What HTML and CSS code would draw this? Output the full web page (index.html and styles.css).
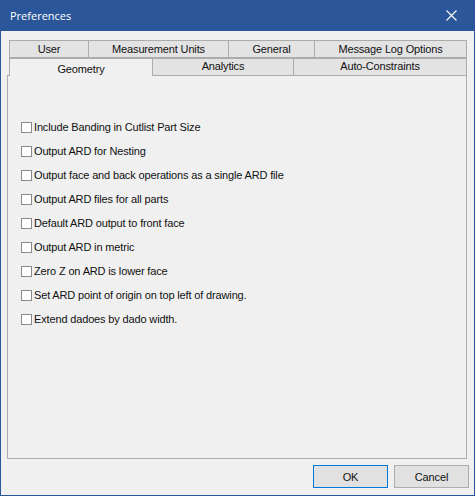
FILE: index.html
```html
<!DOCTYPE html>
<html>
<head>
<meta charset="utf-8">
<title>Preferences</title>
<link rel="stylesheet" href="styles.css">
</head>
<body>
<div class="window">
  <div class="titlebar">
    <span class="title">Preferences</span>
    <span class="close">
      <svg width="11" height="11" viewBox="0 0 11 11"><path d="M0.5 0.5 L10.5 10.5 M10.5 0.5 L0.5 10.5" stroke="#ffffff" stroke-width="1.1" fill="none"/></svg>
    </span>
  </div>
  <div class="content">
    <div class="tabs">
      <div class="tabrow row1">
        <div class="tab t-user">User</div>
        <div class="tab t-units">Measurement Units</div>
        <div class="tab t-general">General</div>
        <div class="tab t-log last">Message Log Options</div>
      </div>
      <div class="tabrow row2">
        <div class="tab selected t-geom">Geometry</div>
        <div class="tab t-analytics">Analytics</div>
        <div class="tab t-auto last">Auto-Constraints</div>
      </div>
    </div>
    <div class="panel">
      <ul class="options">
        <li class="option"><span class="box"></span><span class="label">Include Banding in Cutlist Part Size</span></li>
        <li class="option"><span class="box"></span><span class="label">Output ARD for Nesting</span></li>
        <li class="option"><span class="box"></span><span class="label">Output face and back operations as a single ARD file</span></li>
        <li class="option"><span class="box"></span><span class="label">Output ARD files for all parts</span></li>
        <li class="option"><span class="box"></span><span class="label">Default ARD output to front face</span></li>
        <li class="option"><span class="box"></span><span class="label">Output ARD in metric</span></li>
        <li class="option"><span class="box"></span><span class="label">Zero Z on ARD is lower face</span></li>
        <li class="option"><span class="box"></span><span class="label">Set ARD point of origin on top left of drawing.</span></li>
        <li class="option"><span class="box"></span><span class="label">Extend dadoes by dado width.</span></li>
      </ul>
    </div>
    <div class="footer">
      <button class="btn btn-default">OK</button>
      <button class="btn">Cancel</button>
    </div>
  </div>
</div>
</body>
</html>
```

FILE: styles.css
```css
html, body {
  margin: 0;
  padding: 0;
  background: #f0f0f0;
}

.window {
  width: 475px;
  height: 496px;
  box-sizing: border-box;
  border: 1px solid #2b579a;
  border-top: none;
  background: #f0f0f0;
  display: flex;
  flex-direction: column;
  font-family: "Liberation Sans", Arial, sans-serif;
  font-size: 11px;
  letter-spacing: -0.15px;
  color: #111;
}

.titlebar {
  height: 31px;
  margin: 0 -1px;
  background: #2b579a;
  display: flex;
  align-items: center;
  justify-content: space-between;
  flex: none;
}

.title {
  color: #ffffff;
  font-family: "Open Sans", "Liberation Sans", sans-serif;
  font-size: 11px;
  letter-spacing: 0;
  padding-left: 10px;
  padding-bottom: 1px;
}

.close {
  width: 45px;
  height: 31px;
  display: flex;
  align-items: center;
  justify-content: center;
  margin-right: 1px;
}

.content {
  flex: 1;
  display: flex;
  flex-direction: column;
}

.tabs {
  margin: 9px 7px 0 8px;
  display: flex;
  flex-direction: column;
}

.tabrow {
  display: flex;
}

.tab {
  box-sizing: border-box;
  border: 1px solid #acacac;
  border-right: none;
  background: #e3e3e3;
  display: flex;
  align-items: center;
  justify-content: center;
}

.tab.last {
  border-right: 1px solid #acacac;
  flex: 1;
}

.row1 .tab {
  height: 18px;
  border-bottom: 1px solid #acacac;
}

.row2 .tab {
  height: 17px;
  border-bottom: none;
  padding-bottom: 2px;
}

.t-user { width: 79px; }
.t-units { width: 140px; }
.t-general { width: 86px; }
.t-analytics { width: 141px; }

.tab.selected {
  width: 143px;
  background: #f0f0f0;
  height: 18px;
  margin-bottom: -1px;
  position: relative;
  z-index: 1;
  padding-top: 2px;
  padding-bottom: 0;
}

.panel {
  margin: 0 7px 0 6px;
  height: 384px;
  box-sizing: border-box;
  border: 1px solid #acacac;
}

.options {
  list-style: none;
  margin: 0;
  padding: 46px 0 0 13px;
  display: flex;
  flex-direction: column;
  gap: 13px;
}

.option {
  display: flex;
  align-items: center;
  height: 11px;
}

.box {
  width: 11px;
  height: 11px;
  box-sizing: border-box;
  border: 1px solid #8a8a8a;
  background: #ffffff;
  flex: none;
}

.label {
  margin-left: 2px;
  line-height: 11px;
  white-space: nowrap;
}

.footer {
  display: flex;
  justify-content: flex-end;
  gap: 6px;
  margin-top: 6px;
  padding-right: 5px;
}

.btn {
  width: 75px;
  height: 23px;
  box-sizing: border-box;
  border: 1px solid #adadad;
  background: #e1e1e1;
  font-family: "Liberation Sans", Arial, sans-serif;
  font-size: 11px;
  letter-spacing: -0.15px;
  color: #111;
  padding: 0;
  margin: 0;
}

.btn-default {
  border-color: #0078d7;
}
```
